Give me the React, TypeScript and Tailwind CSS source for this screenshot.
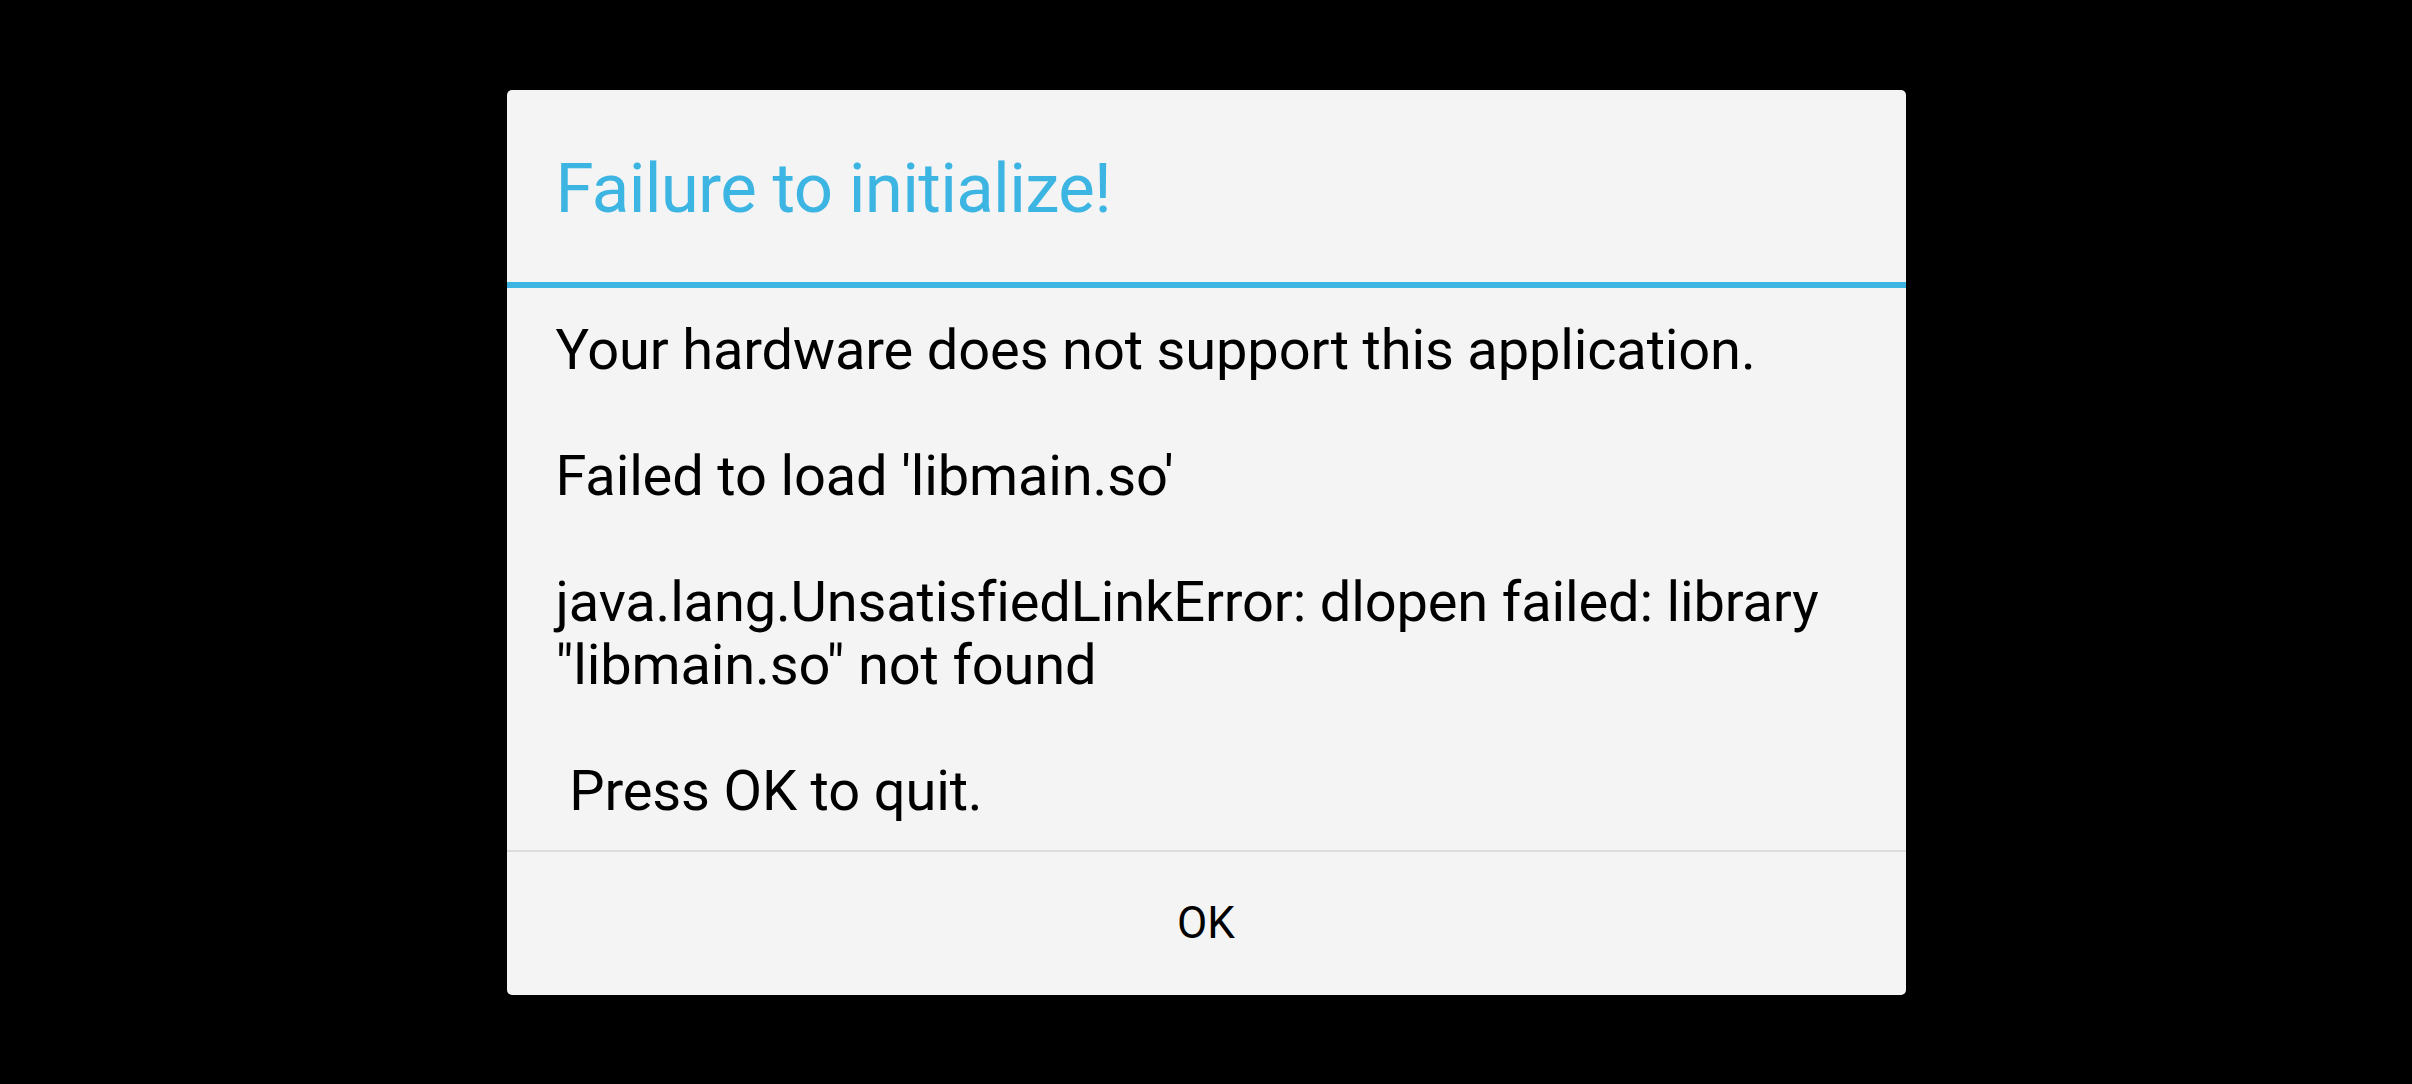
import React from "react";

export default function App() {
  const body = "text-[56px] leading-[63px] tracking-[-0.15px] text-black whitespace-pre";
  return (
    <div
      className="w-[2412px] h-[1084px] bg-black flex items-center justify-center"
      style={{ fontFamily: "Roboto, 'Noto Sans', sans-serif" }}
    >
      <div className="w-[1399px] h-[905px] bg-[#f4f4f4] rounded-[5px] flex flex-col overflow-hidden">
        <div className="h-[192px] pt-[64px] px-[49px]">
          <div className="text-[69px] leading-[69px] tracking-[-0.7px] text-[#3db5e2]">Failure to initialize!</div>
        </div>
        <div className="h-[6px] bg-[#3db5e2]" />
        <div className="pt-[31px] pb-[27px] px-[49px] flex flex-col">
          <div className={body}>Your hardware does not support this application.</div>
          <div className={body}> </div>
          <div className={body}>Failed to load 'libmain.so'</div>
          <div className={body}> </div>
          <div className={body}>java.lang.UnsatisfiedLinkError: dlopen failed: library</div>
          <div className={body}>"libmain.so" not found</div>
          <div className={body}> </div>
          <div className={body}> Press OK to quit.</div>
        </div>
        <div className="h-[2px] bg-[#dcdcdc]" />
        <div className="flex-1 flex items-center justify-center">
          <span className="text-[44px] leading-[44px] text-black">OK</span>
        </div>
      </div>
    </div>
  );
}
